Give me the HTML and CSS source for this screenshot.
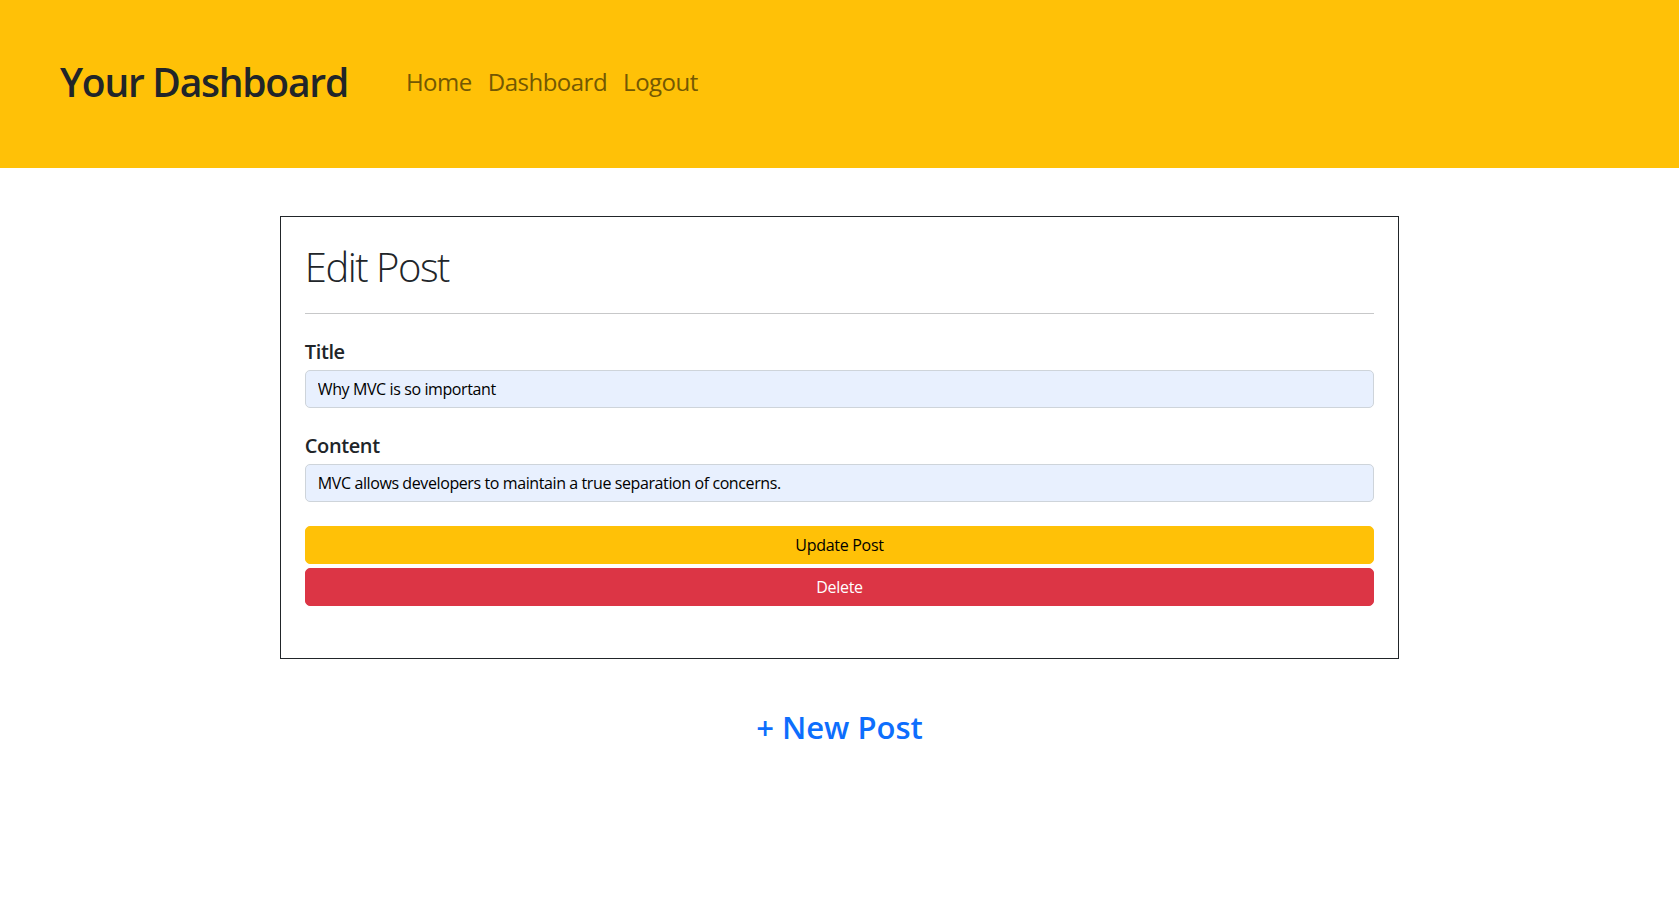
FILE: index.html
```html
<!DOCTYPE html>
<html lang="en">
<head>
<meta charset="utf-8">
<title>Your Dashboard</title>
<link rel="stylesheet" href="styles.css">
</head>
<body>
<header class="topbar">
  <h1 class="brand">Your Dashboard</h1>
  <nav class="nav">
    <a class="nav-link" href="#">Home</a>
    <a class="nav-link" href="#">Dashboard</a>
    <a class="nav-link" href="#">Logout</a>
  </nav>
</header>
<main class="main">
  <section class="card">
    <h2 class="card-title">Edit Post</h2>
    <hr class="divider">
    <form class="form">
      <div class="field">
        <label class="field-label" for="title">Title</label>
        <input class="field-input" id="title" type="text" value="Why MVC is so important">
      </div>
      <div class="field">
        <label class="field-label" for="content">Content</label>
        <input class="field-input" id="content" type="text" value="MVC allows developers to maintain a true separation of concerns.">
      </div>
      <div class="actions">
        <button class="btn btn-update" type="button">Update Post</button>
        <button class="btn btn-delete" type="button">Delete</button>
      </div>
    </form>
  </section>
  <div class="new-post">
    <a class="new-post-link" href="#">+ New Post</a>
  </div>
</main>
</body>
</html>
```

FILE: styles.css
```css
* { box-sizing: border-box; }

html, body {
  margin: 0;
  padding: 0;
  background: #fff;
}

body {
  font-family: "Open Sans", "Noto Sans", "Liberation Sans", sans-serif;
  font-size: 16px;
  line-height: 1.5;
  color: #212529;
}

.topbar {
  height: 168px;
  background: #ffc107;
  display: flex;
  align-items: center;
  padding: 0 0 4px 60px;
}

.brand {
  margin: 0;
  font-size: 39px;
  line-height: 48px;
  font-weight: 600;
  color: #212529;
  letter-spacing: -1.25px;
}

.nav {
  display: flex;
  gap: 16px;
  margin-left: 58px;
}

.nav-link {
  font-size: 24px;
  line-height: 36px;
  color: #735803;
  text-decoration: none;
  letter-spacing: -0.5px;
}

.main {
  padding-top: 48px;
}

.card {
  width: 66.667%;
  margin: 0 auto;
  border: 1px solid #212529;
  padding: 24px;
}

.card-title {
  margin: 0;
  padding-top: 2px;
  font-size: 40px;
  line-height: 48px;
  font-weight: 300;
  color: #212529;
  letter-spacing: -1.5px;
}

.divider {
  margin: 22px 0 16px;
  border: 0;
  border-top: 1px solid #212529;
  opacity: 0.25;
  height: 0;
}

.form {
  margin: 0;
}

.field {
  margin-bottom: 16px;
}

.field-label {
  display: block;
  font-size: 20px;
  line-height: 30px;
  font-weight: 600;
  padding-top: 7px;
  margin-bottom: 3px;
  letter-spacing: -0.4px;
}

.field-input {
  display: block;
  width: 100%;
  height: 38px;
  padding: 6px 12px;
  font-family: inherit;
  font-size: 16px;
  line-height: 24px;
  color: #000;
  background: #e8f0fe;
  border: 1px solid #ced4da;
  border-radius: 5px;
  outline: none;
  letter-spacing: -0.4px;
}

.actions {
  display: flex;
  flex-direction: column;
  gap: 4px;
  margin-top: 24px;
  margin-bottom: 28px;
}

.btn {
  display: block;
  width: 100%;
  height: 38px;
  padding: 6px 12px;
  font-family: inherit;
  font-size: 16px;
  line-height: 24px;
  border: 1px solid transparent;
  border-radius: 5px;
  cursor: pointer;
  letter-spacing: -0.3px;
}

.btn-update {
  background: #ffc107;
  border-color: #ffc107;
  color: #000;
}

.btn-delete {
  background: #dc3545;
  border-color: #dc3545;
  color: #fff;
}

.new-post {
  text-align: center;
  margin-top: 50px;
}

.new-post-link {
  font-size: 31px;
  line-height: 36px;
  font-weight: 600;
  color: #0d6efd;
  text-decoration: none;
  letter-spacing: 0;
}
```
